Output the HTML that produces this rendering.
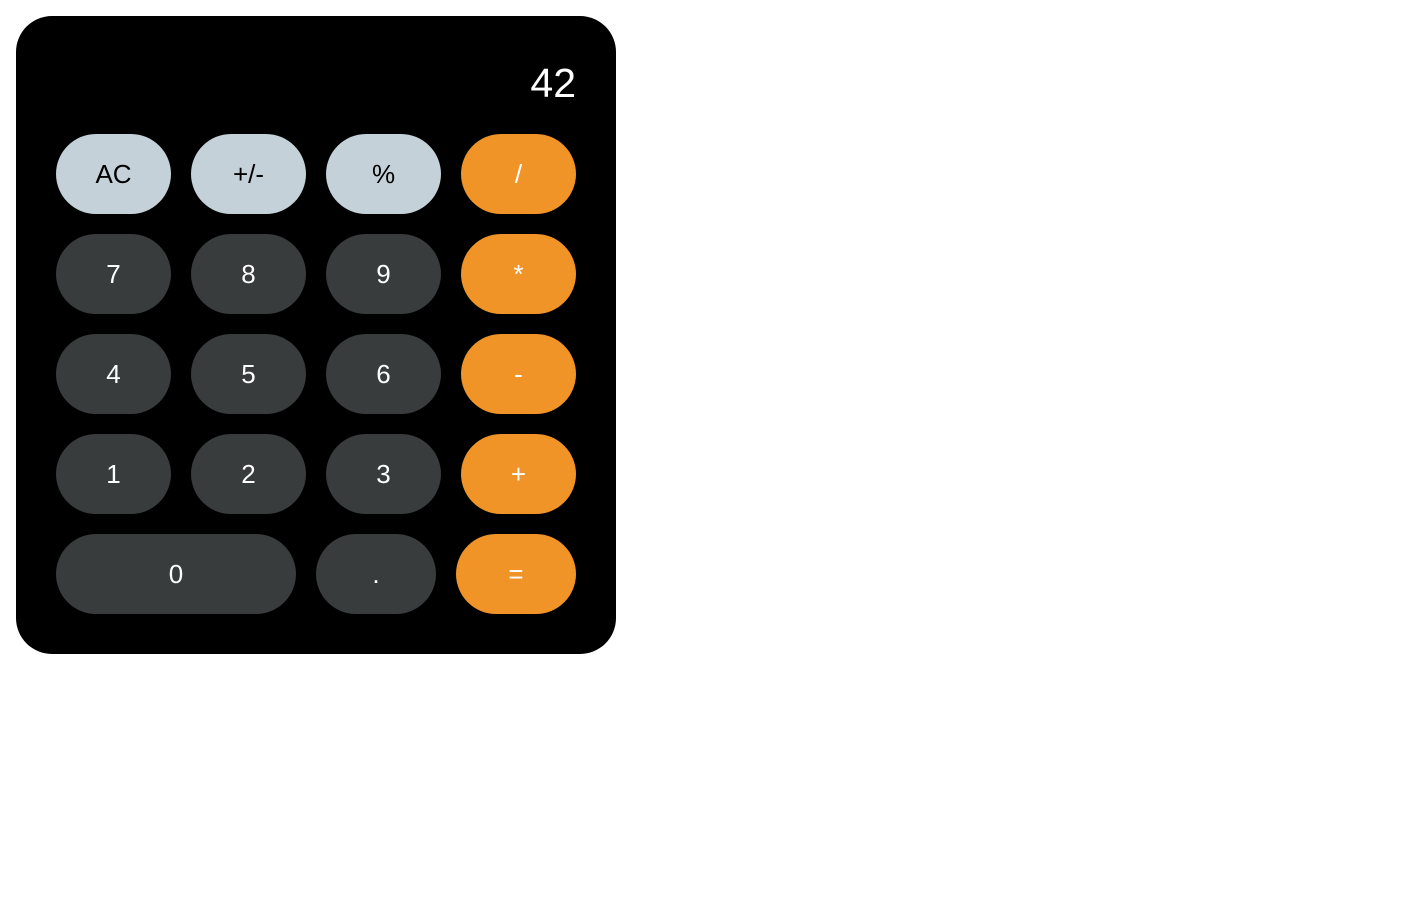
<!DOCTYPE html>
<html><head><style>
body{margin:0;background:#fff;font-family:"Liberation Sans",sans-serif;}
.c{position:absolute;left:16px;top:16px;width:600px;height:638px;background:#000;border-radius:36px;}
.d{position:absolute;right:40px;top:42px;color:#fff;font-size:41px;line-height:50px;}
.b{position:absolute;height:80px;border-radius:40px;display:flex;align-items:center;justify-content:center;font-size:26px;color:#fff;background:#383c3d;}
.l{background:#c4d1d8;color:#000;}
.o{background:#f09428;color:#fff;}
</style></head><body>
<div class="c">
<div class="d">42</div>
<div class="b l" style="left:40px;top:118px;width:115px">AC</div>
<div class="b l" style="left:175px;top:118px;width:115px">+/-</div>
<div class="b l" style="left:310px;top:118px;width:115px">%</div>
<div class="b o" style="left:445px;top:118px;width:115px">/</div>
<div class="b" style="left:40px;top:218px;width:115px">7</div>
<div class="b" style="left:175px;top:218px;width:115px">8</div>
<div class="b" style="left:310px;top:218px;width:115px">9</div>
<div class="b o" style="left:445px;top:218px;width:115px">*</div>
<div class="b" style="left:40px;top:318px;width:115px">4</div>
<div class="b" style="left:175px;top:318px;width:115px">5</div>
<div class="b" style="left:310px;top:318px;width:115px">6</div>
<div class="b o" style="left:445px;top:318px;width:115px">-</div>
<div class="b" style="left:40px;top:418px;width:115px">1</div>
<div class="b" style="left:175px;top:418px;width:115px">2</div>
<div class="b" style="left:310px;top:418px;width:115px">3</div>
<div class="b o" style="left:445px;top:418px;width:115px">+</div>
<div class="b" style="left:40px;top:518px;width:240px">0</div>
<div class="b" style="left:300px;top:518px;width:120px">.</div>
<div class="b o" style="left:440px;top:518px;width:120px">=</div>
</div>
</body></html>
